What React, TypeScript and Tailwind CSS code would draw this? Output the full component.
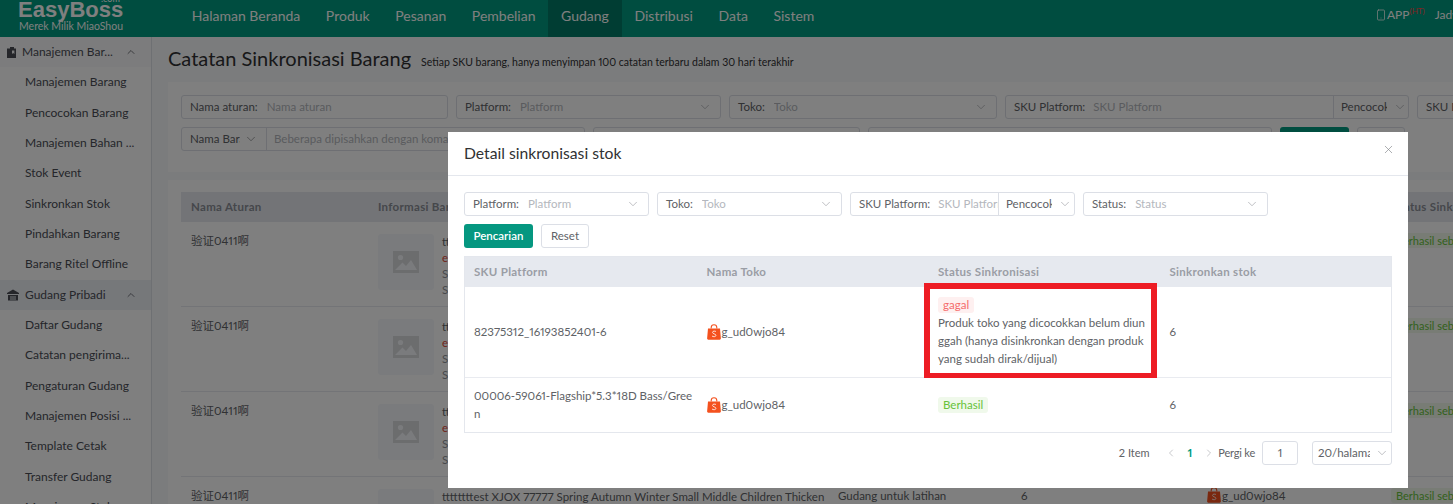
import { ChevronDown, ChevronLeft, ChevronRight, ChevronUp, Smartphone, X } from 'lucide-react';

const NAV = [
  { label: 'Halaman Beranda', active: false },
  { label: 'Produk', active: false },
  { label: 'Pesanan', active: false },
  { label: 'Pembelian', active: false },
  { label: 'Gudang', active: true },
  { label: 'Distribusi', active: false },
  { label: 'Data', active: false },
  { label: 'Sistem', active: false },
];

const MENU_ONE = [
  'Manajemen Barang',
  'Pencocokan Barang',
  'Manajemen Bahan ...',
  'Stok Event',
  'Sinkronkan Stok',
  'Pindahkan Barang',
  'Barang Ritel Offline',
];

const MENU_TWO = [
  'Daftar Gudang',
  'Catatan pengirima...',
  'Pengaturan Gudang',
  'Manajemen Posisi ...',
  'Template Cetak',
  'Transfer Gudang',
];

function ShopeeBag() {
  return (
    <svg viewBox="0 0 14 16" className="h-4 w-[14px] shrink-0">
      <path d="M4.2 4.5V3.6a2.8 2.8 0 0 1 5.6 0v.9" fill="none" stroke="#f4511e" strokeWidth="1.1" />
      <path d="M1 4.4h12l.9 10a1.2 1.2 0 0 1-1.2 1.3H1.3A1.2 1.2 0 0 1 .1 14.4z" fill="#f4511e" />
      <path d="M9 7.6C8.2 6.8 5.6 6.8 5.5 8.4c0 1.7 3.4 1.2 3.4 3 0 1.6-2.8 1.6-3.9.6" fill="none" stroke="#fff" strokeWidth="0.8" />
    </svg>
  );
}

function PlaceholderImage() {
  return (
    <svg viewBox="0 0 26 22" className="h-[22px] w-[26px]">
      <rect width="26" height="22" fill="#d9dadd" />
      <circle cx="7.5" cy="6.5" r="2.6" fill="#f5f7fa" />
      <path d="M2 19 9.5 11.5l3.5 3.5 5-6 6 10z" fill="#f5f7fa" />
    </svg>
  );
}

function MenuHeader({ label, icon, shade }: { label: string; icon: React.ReactNode; shade: boolean }) {
  return (
    <div className={`flex h-[30.33px] items-center pl-[7px] pr-[14px] ${shade ? 'bg-[#edf0f5]' : 'bg-[#f9f9fa]'}`}>
      {icon}
      <span className="ml-[6px] flex-1 truncate">{label}</span>
      <ChevronUp size={12} strokeWidth={1.5} />
    </div>
  );
}

function SelectBox({ label, placeholder, width }: { label: string; placeholder: string; width: string }) {
  return (
    <div className={`flex h-6 shrink-0 items-center rounded-[3px] border border-[#dcdfe6] bg-white pl-2 pr-2 ${width}`}>
      <span className="mr-[9px] whitespace-nowrap text-[#606266]">{label}</span>
      <span className="flex-1 truncate text-[#b4b7bd]">{placeholder}</span>
      <ChevronDown size={14} strokeWidth={1} className="text-[#909399]" />
    </div>
  );
}

function TextBox({ label, placeholder, width }: { label: string; placeholder: string; width: string }) {
  return (
    <div className={`flex h-6 shrink-0 items-center overflow-hidden whitespace-nowrap rounded-[3px] border border-[#dcdfe6] bg-white pl-2 ${width}`}>
      <span className="mr-[9px] text-[#606266]">{label}</span>
      <span className="text-[#b4b7bd]">{placeholder}</span>
    </div>
  );
}

function SkuBox({ width, inputWidth }: { width: string; inputWidth: string }) {
  return (
    <div className={`flex h-6 shrink-0 items-center rounded-[3px] border border-[#dcdfe6] bg-white ${width}`}>
      <div className={`flex h-full items-center overflow-hidden whitespace-nowrap border-r border-[#dcdfe6] pl-2 ${inputWidth}`}>
        <span className="mr-[8px] text-[#606266]">SKU Platform:</span>
        <span className="text-[#b4b7bd]">SKU Platform</span>
      </div>
      <span className="ml-[7px] w-[46px] overflow-hidden whitespace-nowrap text-[#606266]">Pencocokan</span>
      <ChevronDown size={14} strokeWidth={1} className="ml-[6px] text-[#909399]" />
    </div>
  );
}

function RuleRow() {
  return (
    <div className="grid h-[85px] grid-cols-[187px_460px_183px_186px_184px_1fr] border-b border-[#e6e9ef] bg-white">
      <div className="pl-[10px] pt-[10px]">验证0411啊</div>
      <div className="flex pl-[10px] pt-[12px]">
        <div className="flex h-14 w-14 shrink-0 items-center justify-center rounded-[3px] bg-[#f5f7fa]">
          <PlaceholderImage />
        </div>
        <div className="ml-2 whitespace-nowrap leading-[16px]">
          <div>ttttttttest XJOX 77777 Spring Autumn Winter Small Middle Children Thicken</div>
          <div className="text-[#e04a3a]">edit</div>
          <div className="text-[#909399]">SKU</div>
          <div className="text-[#909399]">SKU</div>
        </div>
      </div>
      <div className="pl-[10px] pt-[10px]">Gudang untuk latihan</div>
      <div className="pl-[10px] pt-[10px]">6</div>
      <div className="flex items-start pl-[10px] pt-[10px]">
        <ShopeeBag />
        <span className="ml-px">g_ud0wjo84</span>
      </div>
      <div className="pt-[10px]">
        <span className="ml-[10px] whitespace-nowrap rounded-[3px] bg-[#f0f9eb] px-[5px] py-[1px] text-[11px] text-[#67c23a]">Berhasil sebagian</span>
      </div>
    </div>
  );
}

export default function App() {
  return (
    <div className="relative h-[504px] w-[1453px] overflow-hidden bg-[#f7f8fa] text-[11.5px] proportional-nums text-[#606266] [font-family:'Lato','Noto_Sans_CJK_SC',sans-serif]">
      <header className="flex h-[37px] items-center bg-[#009a80] text-white">
        <div className="relative flex h-full w-[179px] shrink-0 flex-col justify-end overflow-hidden pb-[4px] pl-[18px]">
          <span className="absolute left-[101px] top-[-8px] text-[9px]">.com</span>
          <div className="text-[22px] font-bold leading-[20px] [font-family:'Liberation_Sans',sans-serif]">EasyBoss</div>
          <div className="pl-px text-[10.5px] leading-[13px]">Merek Milik MiaoShou</div>
        </div>
        <nav className="flex h-full">
          {NAV.map((item) => (
            <span
              key={item.label}
              className={`flex h-full items-center whitespace-nowrap px-[12.8px] pb-[7px] text-[14px] ${item.active ? 'bg-[#007a66]' : ''}`}
            >
              {item.label}
            </span>
          ))}
        </nav>
        <div className="ml-auto flex h-full w-[78px] shrink-0 items-center overflow-hidden whitespace-nowrap pb-[7px] text-[12px]">
          <Smartphone size={12} strokeWidth={1.5} className="shrink-0" />
          <span>APP</span>
          <span className="mb-2 text-[8px] text-[#f44]">(HT)</span>
          <span className="ml-[10px]">Jadwal</span>
        </div>
      </header>

      <div className="flex h-[467px]">
        <aside className="w-[152px] shrink-0 border-r border-[#dde0e6] bg-white text-[12px] text-[#4a4d55]">
          <MenuHeader
            label="Manajemen Bar..."
            shade={false}
            icon={
              <svg viewBox="0 0 9 11" className="h-[11px] w-[9px] shrink-0" fill="#4a4d55">
                <path d="M0 1.5h3V0h4v1.5h2V11H0zM5 3.5v3.5l1.2-1 1.2 1V3.5z" fillRule="evenodd" />
              </svg>
            }
          />
          {MENU_ONE.map((m) => (
            <div key={m} className="flex h-[30.33px] items-center truncate pl-[25px]">{m}</div>
          ))}
          <MenuHeader
            label="Gudang Pribadi"
            shade
            icon={
              <svg viewBox="0 0 12 12" className="h-3 w-3 shrink-0" fill="#4a4d55">
                <path d="M6 .5 12 4v1H0V4zM1 6h10v5.5H1zm2 1.5v1h6v-1zm0 2v1h6v-1z" fillRule="evenodd" />
              </svg>
            }
          />
          {MENU_TWO.map((m) => (
            <div key={m} className="flex h-[30.33px] items-center truncate pl-[25px]">{m}</div>
          ))}
          <div className="flex h-[30.33px] items-center truncate pl-[25px]">Manajemen Stok</div>
        </aside>

        <main className="min-w-0 flex-1 pl-[16px]">
          <div className="flex h-[45px] items-center whitespace-nowrap">
            <h1 className="pb-[3px] text-[20px] text-[#303133]">Catatan Sinkronisasi Barang</h1>
            <span className="ml-[10px] mt-[7px] text-[10.5px] text-[#303133]">Setiap SKU barang, hanya menyimpan 100 catatan terbaru dalam 30 hari terakhir</span>
          </div>

          <section className="h-[90px] w-[1400px] bg-white pl-[13px] pt-[13px]">
            <div className="flex gap-2">
              <TextBox label="Nama aturan:" placeholder="Nama aturan" width="w-[267px]" />
              <SelectBox label="Platform:" placeholder="Platform" width="w-[265px]" />
              <SelectBox label="Toko:" placeholder="Toko" width="w-[268px]" />
              <SkuBox width="w-[404px]" inputWidth="w-[328px]" />
              <TextBox label="SKU Barang:" placeholder="SKU Barang" width="w-[200px]" />
            </div>
            <div className="mt-2 flex gap-2">
              <div className="flex h-6 w-[404px] shrink-0 items-center rounded-[3px] border border-[#dcdfe6] bg-white">
                <div className="flex h-full w-[85px] shrink-0 items-center border-r border-[#dcdfe6] pl-2">
                  <span className="w-[50px] overflow-hidden whitespace-nowrap">Nama Barang</span>
                  <ChevronDown size={14} strokeWidth={1} className="ml-1" />
                </div>
                <span className="ml-[7px] truncate text-[#b4b7bd]">Beberapa dipisahkan dengan koma</span>
              </div>
              <div className="h-6 w-[267px] shrink-0 rounded-[3px] border border-[#dcdfe6] bg-white" />
              <div className="h-6 w-[404px] shrink-0 rounded-[3px] border border-[#dcdfe6] bg-white" />
              <div className="h-6 w-[69px] shrink-0 rounded-[3px] bg-[#009a80]" />
              <div className="h-6 w-[48px] shrink-0 rounded-[3px] border border-[#dcdfe6] bg-white" />
            </div>
          </section>

          <section className="mt-2 h-[400px] w-[1400px] bg-white pl-[13px] pt-[12px]">
            <div className="grid h-[30px] grid-cols-[187px_460px_183px_186px_184px_1fr] items-center bg-[#e6e9ef] font-bold tracking-[0.3px] text-[#8b8e96]">
              <div className="pl-[10px]">Nama Aturan</div>
              <div className="pl-[10px]">Informasi Barang</div>
              <div className="pl-[10px]">Gudang</div>
              <div className="pl-[10px]">Stok</div>
              <div className="pl-[10px]">Nama Toko</div>
              <div className="whitespace-nowrap pl-[12px]">Status Sinkronisasi</div>
            </div>
            <RuleRow />
            <RuleRow />
            <RuleRow />
            <RuleRow />
          </section>
        </main>
      </div>

      <div className="absolute inset-0 bg-black/50" />

      <div className="absolute left-[448px] top-[132px] flex h-[356px] w-[960px] flex-col bg-white">
        <div className="flex h-[44px] shrink-0 items-center justify-between border-b border-[#e4e7ed] pl-4 pr-[13px]">
          <span className="text-[15.7px] text-[#303133]">Detail sinkronisasi stok</span>
          <X size={13} strokeWidth={1.2} className="mb-[9px] text-[#808388]" />
        </div>
        <div className="px-4 pt-4">
          <div className="flex gap-2">
            <SelectBox label="Platform:" placeholder="Platform" width="w-[185px]" />
            <SelectBox label="Toko:" placeholder="Toko" width="w-[185px]" />
            <SkuBox width="w-[225px]" inputWidth="w-[148px]" />
            <SelectBox label="Status:" placeholder="Status" width="w-[185px]" />
          </div>
          <div className="mt-2 flex gap-2">
            <button className="h-6 w-[69px] rounded-[3px] bg-[#059780] font-semibold text-white">Pencarian</button>
            <button className="h-6 w-[48px] rounded-[3px] border border-[#dcdfe6] bg-white text-[#606266]">Reset</button>
          </div>

          <div className="mt-2 border border-[#e4e7ed]">
            <div className="grid h-[30px] grid-cols-4 items-center bg-[#e6e9ef] font-bold tracking-[0.3px] text-[#9a9da5]">
              <div className="pl-[9px]">SKU Platform</div>
              <div className="pl-[10px]">Nama Toko</div>
              <div className="pl-[10px]">Status Sinkronisasi</div>
              <div className="pl-[10px]">Sinkronkan stok</div>
            </div>
            <div className="grid h-[91px] grid-cols-4 items-center border-b border-[#e9ebf0]">
              <div className="pl-[9px]">82375312_16193852401-6</div>
              <div className="flex items-center pl-[10px]">
                <ShopeeBag />
                <span className="ml-px">g_ud0wjo84</span>
              </div>
              <div className="whitespace-nowrap pl-[10px] leading-[18px]">
                <span className="inline-block h-4 rounded-[3px] bg-[#fef0f0] px-[5px] leading-[16px] text-[#f56c6c]">gagal</span>
                <div>Produk toko yang dicocokkan belum diun</div>
                <div>ggah (hanya disinkronkan dengan produk</div>
                <div>yang sudah dirak/dijual)</div>
              </div>
              <div className="pl-[10px]">6</div>
            </div>
            <div className="grid h-[54px] grid-cols-4 items-center">
              <div className="whitespace-nowrap pl-[9px] leading-[18px]">
                <div>00006-59061-Flagship*5.3*18D Bass/Gree</div>
                <div>n</div>
              </div>
              <div className="flex items-center pl-[10px]">
                <ShopeeBag />
                <span className="ml-px">g_ud0wjo84</span>
              </div>
              <div className="pl-[10px]">
                <span className="inline-block h-4 rounded-[3px] bg-[#f0f9eb] px-[5px] leading-[16px] text-[#67c23a]">Berhasil</span>
              </div>
              <div className="pl-[10px]">6</div>
            </div>
          </div>

          <div className="mt-2 flex items-center justify-end">
            <span className="text-[11px]">2 Item</span>
            <ChevronLeft size={12} strokeWidth={1} className="ml-[15px] text-[#909399]" />
            <span className="ml-[11px] font-bold text-[#009a80]">1</span>
            <ChevronRight size={12} strokeWidth={1} className="ml-[11px] text-[#909399]" />
            <span className="ml-[3px] text-[11px] tracking-[-0.2px]">Pergi ke</span>
            <div className="ml-[7px] flex h-6 w-9 items-center justify-center rounded-[3px] border border-[#dcdfe6]">1</div>
            <div className="ml-[14px] flex h-6 w-20 items-center rounded-[3px] border border-[#dcdfe6] pl-[5px]">
              <span className="w-[52px] overflow-hidden whitespace-nowrap">20/halaman</span>
              <ChevronDown size={14} strokeWidth={1} className="ml-[5px] text-[#909399]" />
            </div>
          </div>
        </div>
      </div>

      <div className="absolute left-[924px] top-[283px] h-[95px] w-[233px] border-[6px] border-b-[5px] border-[#ed1c24]" />
    </div>
  );
}
